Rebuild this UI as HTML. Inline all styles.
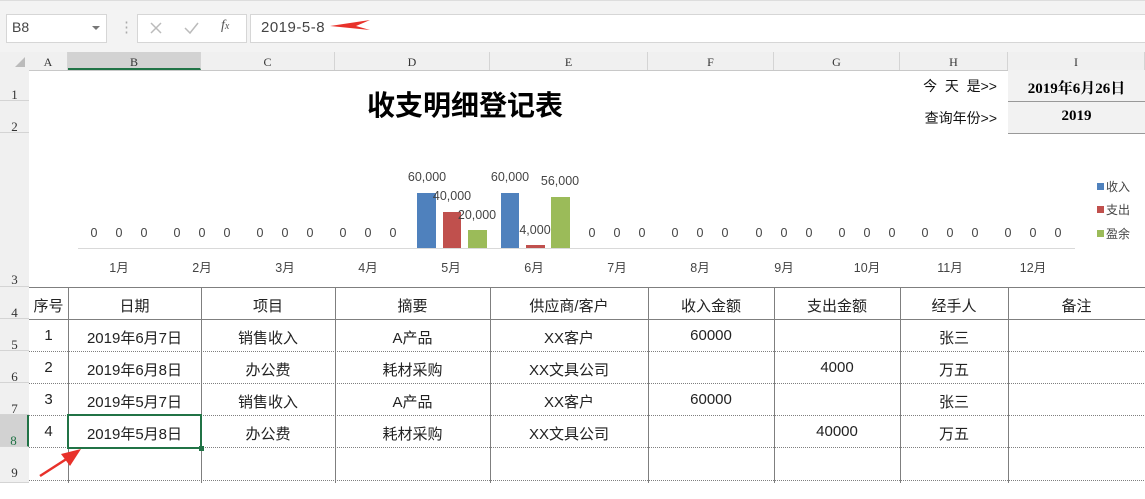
<!DOCTYPE html><html><head><meta charset="utf-8"><style>
body{margin:0;width:1145px;height:483px;overflow:hidden;background:#fff;font-family:"Liberation Sans","Noto Sans CJK SC",sans-serif;position:relative}
.a{position:absolute}
.t{position:absolute;font-size:15px;color:#222;text-align:center;white-space:nowrap}
.ch{position:absolute;top:52px;height:18px;font-size:12px;color:#333;text-align:center;line-height:20px;font-family:"Liberation Serif",serif;border-right:1px solid #d4d4d4;background:#f0f0f0;box-sizing:border-box}
.rh{position:absolute;left:0;width:29px;font-size:13px;color:#333;text-align:center;background:#f0f0f0;border-bottom:1px solid #d4d4d4;box-sizing:border-box;font-family:"Liberation Serif",serif}
</style></head><body>
<div class="a" style="left:0;top:0;width:1145px;height:52px;background:#f3f3f3;border-top:1px solid #ddd"></div>
<div class="a" style="left:6px;top:14px;width:99px;height:27px;background:#fff;border:1px solid #d6d6d6"></div>
<div class="t" style="left:12px;top:19px;font-size:14px;color:#444">B8</div>
<div class="a" style="left:92px;top:26px;border:4px solid transparent;border-top:4px solid #777"></div>
<div class="t" style="left:119px;top:18px;color:#aaa">⋮</div>
<div class="a" style="left:137px;top:14px;width:108px;height:27px;background:#fff;border:1px solid #d6d6d6"></div>
<svg class="a" style="left:148px;top:20px" width="80" height="16"><path d="M3 3L13 13M13 3L3 13" stroke="#bbb" stroke-width="1.5"/><path d="M37 8L42 13L50 3" stroke="#bbb" stroke-width="1.5" fill="none"/></svg>
<div class="t" style="left:221px;top:18px;color:#555;font-style:italic;font-family:'Liberation Serif',serif;font-size:14px">f<span style="font-size:10px">x</span></div>
<div class="a" style="left:250px;top:14px;width:895px;height:27px;background:#fff;border:1px solid #d6d6d6"></div>
<div class="t" style="left:261px;top:19px;color:#444;letter-spacing:0.5px">2019-5-8</div>
<svg class="a" style="left:326px;top:16px" width="46" height="20"><polygon points="4,10 44,4 30,10 44,14" fill="#e8312a"/></svg>
<div class="a" style="left:0;top:52px;width:1145px;height:18px;background:#f0f0f0;border-bottom:1px solid #c8c8c8"></div>
<svg class="a" style="left:14px;top:56px" width="12" height="12"><polygon points="11,1 11,11 1,11" fill="#bbb"/></svg>
<div class="ch" style="left:29px;width:39px">A</div>
<div class="ch" style="left:68px;width:133px;background:#d2d2d2;border-bottom:2px solid #217346">B</div>
<div class="ch" style="left:201px;width:134px">C</div>
<div class="ch" style="left:335px;width:155px">D</div>
<div class="ch" style="left:490px;width:158px">E</div>
<div class="ch" style="left:648px;width:126px">F</div>
<div class="ch" style="left:774px;width:126px">G</div>
<div class="ch" style="left:900px;width:108px">H</div>
<div class="ch" style="left:1008px;width:137px">I</div>
<div class="a" style="left:28px;top:70px;width:1px;height:413px;background:#c8c8c8"></div>
<div class="rh" style="top:70px;height:31px;line-height:50px">1</div>
<div class="rh" style="top:101px;height:32px;line-height:52px">2</div>
<div class="rh" style="top:133px;height:154px;line-height:294px">3</div>
<div class="rh" style="top:287px;height:32px;line-height:52px">4</div>
<div class="rh" style="top:319px;height:32px;line-height:52px">5</div>
<div class="rh" style="top:351px;height:32px;line-height:52px">6</div>
<div class="rh" style="top:383px;height:32px;line-height:52px">7</div>
<div class="rh" style="top:415px;height:32px;line-height:52px;background:#d2d2d2;color:#217346;border-right:2px solid #217346">8</div>
<div class="rh" style="top:447px;height:36px;line-height:52px">9</div>
<div class="t" style="left:335px;top:84px;width:260px;font-size:28px;font-weight:bold;color:#000">收支明细登记表</div>
<div class="t" style="left:895px;top:76px;width:102px;text-align:right;color:#111;font-size:14px">今&nbsp;&nbsp;天&nbsp;&nbsp;是&gt;&gt;</div>
<div class="t" style="left:895px;top:108px;width:102px;text-align:right;color:#111;font-size:14px">查询年份&gt;&gt;</div>
<div class="a" style="left:1008px;top:70px;width:137px;height:63px;background:#f2f2f2"></div>
<div class="a" style="left:1008px;top:101px;width:137px;height:1px;background:#999"></div>
<div class="a" style="left:1008px;top:133px;width:137px;height:1px;background:#999"></div>
<div class="t" style="left:1008px;top:77px;width:137px;font-weight:bold;color:#000;font-family:'Liberation Serif','Noto Serif CJK SC',serif;font-size:15px">2019年6月26日</div>
<div class="t" style="left:1008px;top:108px;width:137px;font-weight:bold;color:#000;font-family:'Liberation Serif',serif;font-size:15px">2019</div>
<svg class="a" style="left:0;top:0" width="1145" height="290" font-family="Liberation Sans,Noto Sans CJK SC,sans-serif" font-size="12.5" fill="#444">
<line x1="78" y1="248.5" x2="1075" y2="248.5" stroke="#d9d9d9"/>
<rect x="417" y="193" width="19" height="55" fill="#4f81bd"/><rect x="443" y="212" width="18" height="36" fill="#c0504d"/><rect x="468" y="230" width="19" height="18" fill="#9bbb59"/>
<rect x="501" y="193" width="18" height="55" fill="#4f81bd"/><rect x="526" y="245" width="19" height="3" fill="#c0504d"/><rect x="551" y="197" width="19" height="51" fill="#9bbb59"/>
<g text-anchor="middle">
<text x="427" y="181">60,000</text><text x="452" y="200">40,000</text><text x="477" y="219">20,000</text>
<text x="510" y="181">60,000</text><text x="535" y="234">4,000</text><text x="560" y="185">56,000</text>
<text x="94" y="237">0</text><text x="119" y="237">0</text><text x="144" y="237">0</text>
<text x="177" y="237">0</text><text x="202" y="237">0</text><text x="227" y="237">0</text>
<text x="260" y="237">0</text><text x="285" y="237">0</text><text x="310" y="237">0</text>
<text x="343" y="237">0</text><text x="368" y="237">0</text><text x="393" y="237">0</text>
<text x="592" y="237">0</text><text x="617" y="237">0</text><text x="642" y="237">0</text>
<text x="675" y="237">0</text><text x="700" y="237">0</text><text x="725" y="237">0</text>
<text x="759" y="237">0</text><text x="784" y="237">0</text><text x="809" y="237">0</text>
<text x="842" y="237">0</text><text x="867" y="237">0</text><text x="892" y="237">0</text>
<text x="925" y="237">0</text><text x="950" y="237">0</text><text x="975" y="237">0</text>
<text x="1008" y="237">0</text><text x="1033" y="237">0</text><text x="1058" y="237">0</text>
<text x="119" y="272">1月</text><text x="202" y="272">2月</text><text x="285" y="272">3月</text><text x="368" y="272">4月</text><text x="451" y="272">5月</text><text x="534" y="272">6月</text><text x="617" y="272">7月</text><text x="700" y="272">8月</text><text x="784" y="272">9月</text><text x="867" y="272">10月</text><text x="950" y="272">11月</text><text x="1033" y="272">12月</text>
</g>
<rect x="1097" y="183" width="7" height="7" fill="#4f81bd"/><text x="1106" y="191" font-size="12">收入</text>
<rect x="1097" y="206" width="7" height="7" fill="#c0504d"/><text x="1106" y="214" font-size="12">支出</text>
<rect x="1097" y="230" width="7" height="7" fill="#9bbb59"/><text x="1106" y="238" font-size="12">盈余</text>
</svg>
<svg class="a" style="left:0;top:286px" width="1145" height="197">
<g stroke="#7f7f7f"><line x1="29" y1="1.5" x2="1145" y2="1.5"/><line x1="29" y1="33.5" x2="1145" y2="33.5"/>
<g stroke-dasharray="1,1"><line x1="29" y1="65.5" x2="1145" y2="65.5"/><line x1="29" y1="97.5" x2="1145" y2="97.5"/><line x1="29" y1="129.5" x2="1145" y2="129.5"/><line x1="29" y1="161.5" x2="1145" y2="161.5"/><line x1="29" y1="194.5" x2="1145" y2="194.5"/></g>
<line x1="68.5" y1="1" x2="68.5" y2="197"/><line x1="201.5" y1="1" x2="201.5" y2="197"/><line x1="335.5" y1="1" x2="335.5" y2="197"/><line x1="490.5" y1="1" x2="490.5" y2="197"/><line x1="648.5" y1="1" x2="648.5" y2="197"/><line x1="774.5" y1="1" x2="774.5" y2="197"/><line x1="900.5" y1="1" x2="900.5" y2="197"/><line x1="1008.5" y1="1" x2="1008.5" y2="197"/></g>
<rect x="68" y="129" width="133" height="33" fill="none" stroke="#217346" stroke-width="2"/><rect x="199" y="160" width="5" height="5" fill="#217346"/>
<line x1="40" y1="190" x2="68" y2="172" stroke="#e8312a" stroke-width="2.5"/>
<polygon points="81,163 61,168 70,180" fill="#e8312a"/>
</svg>
<div class="t" style="left:29px;top:295px;width:39px">序号</div><div class="t" style="left:68px;top:295px;width:133px">日期</div><div class="t" style="left:201px;top:295px;width:134px">项目</div><div class="t" style="left:335px;top:295px;width:155px">摘要</div><div class="t" style="left:490px;top:295px;width:158px">供应商/客户</div><div class="t" style="left:648px;top:295px;width:126px">收入金额</div><div class="t" style="left:774px;top:295px;width:126px">支出金额</div><div class="t" style="left:900px;top:295px;width:108px">经手人</div><div class="t" style="left:1008px;top:295px;width:137px">备注</div>
<div class="t" style="left:29px;top:327px;width:39px">1</div><div class="t" style="left:68px;top:327px;width:133px">2019年6月7日</div><div class="t" style="left:201px;top:327px;width:134px">销售收入</div><div class="t" style="left:335px;top:327px;width:155px">A产品</div><div class="t" style="left:490px;top:327px;width:158px">XX客户</div><div class="t" style="left:648px;top:327px;width:126px">60000</div><div class="t" style="left:900px;top:327px;width:108px">张三</div>
<div class="t" style="left:29px;top:359px;width:39px">2</div><div class="t" style="left:68px;top:359px;width:133px">2019年6月8日</div><div class="t" style="left:201px;top:359px;width:134px">办公费</div><div class="t" style="left:335px;top:359px;width:155px">耗材采购</div><div class="t" style="left:490px;top:359px;width:158px">XX文具公司</div><div class="t" style="left:774px;top:359px;width:126px">4000</div><div class="t" style="left:900px;top:359px;width:108px">万五</div>
<div class="t" style="left:29px;top:391px;width:39px">3</div><div class="t" style="left:68px;top:391px;width:133px">2019年5月7日</div><div class="t" style="left:201px;top:391px;width:134px">销售收入</div><div class="t" style="left:335px;top:391px;width:155px">A产品</div><div class="t" style="left:490px;top:391px;width:158px">XX客户</div><div class="t" style="left:648px;top:391px;width:126px">60000</div><div class="t" style="left:900px;top:391px;width:108px">张三</div>
<div class="t" style="left:29px;top:423px;width:39px">4</div><div class="t" style="left:68px;top:423px;width:133px">2019年5月8日</div><div class="t" style="left:201px;top:423px;width:134px">办公费</div><div class="t" style="left:335px;top:423px;width:155px">耗材采购</div><div class="t" style="left:490px;top:423px;width:158px">XX文具公司</div><div class="t" style="left:774px;top:423px;width:126px">40000</div><div class="t" style="left:900px;top:423px;width:108px">万五</div>
</body></html>
